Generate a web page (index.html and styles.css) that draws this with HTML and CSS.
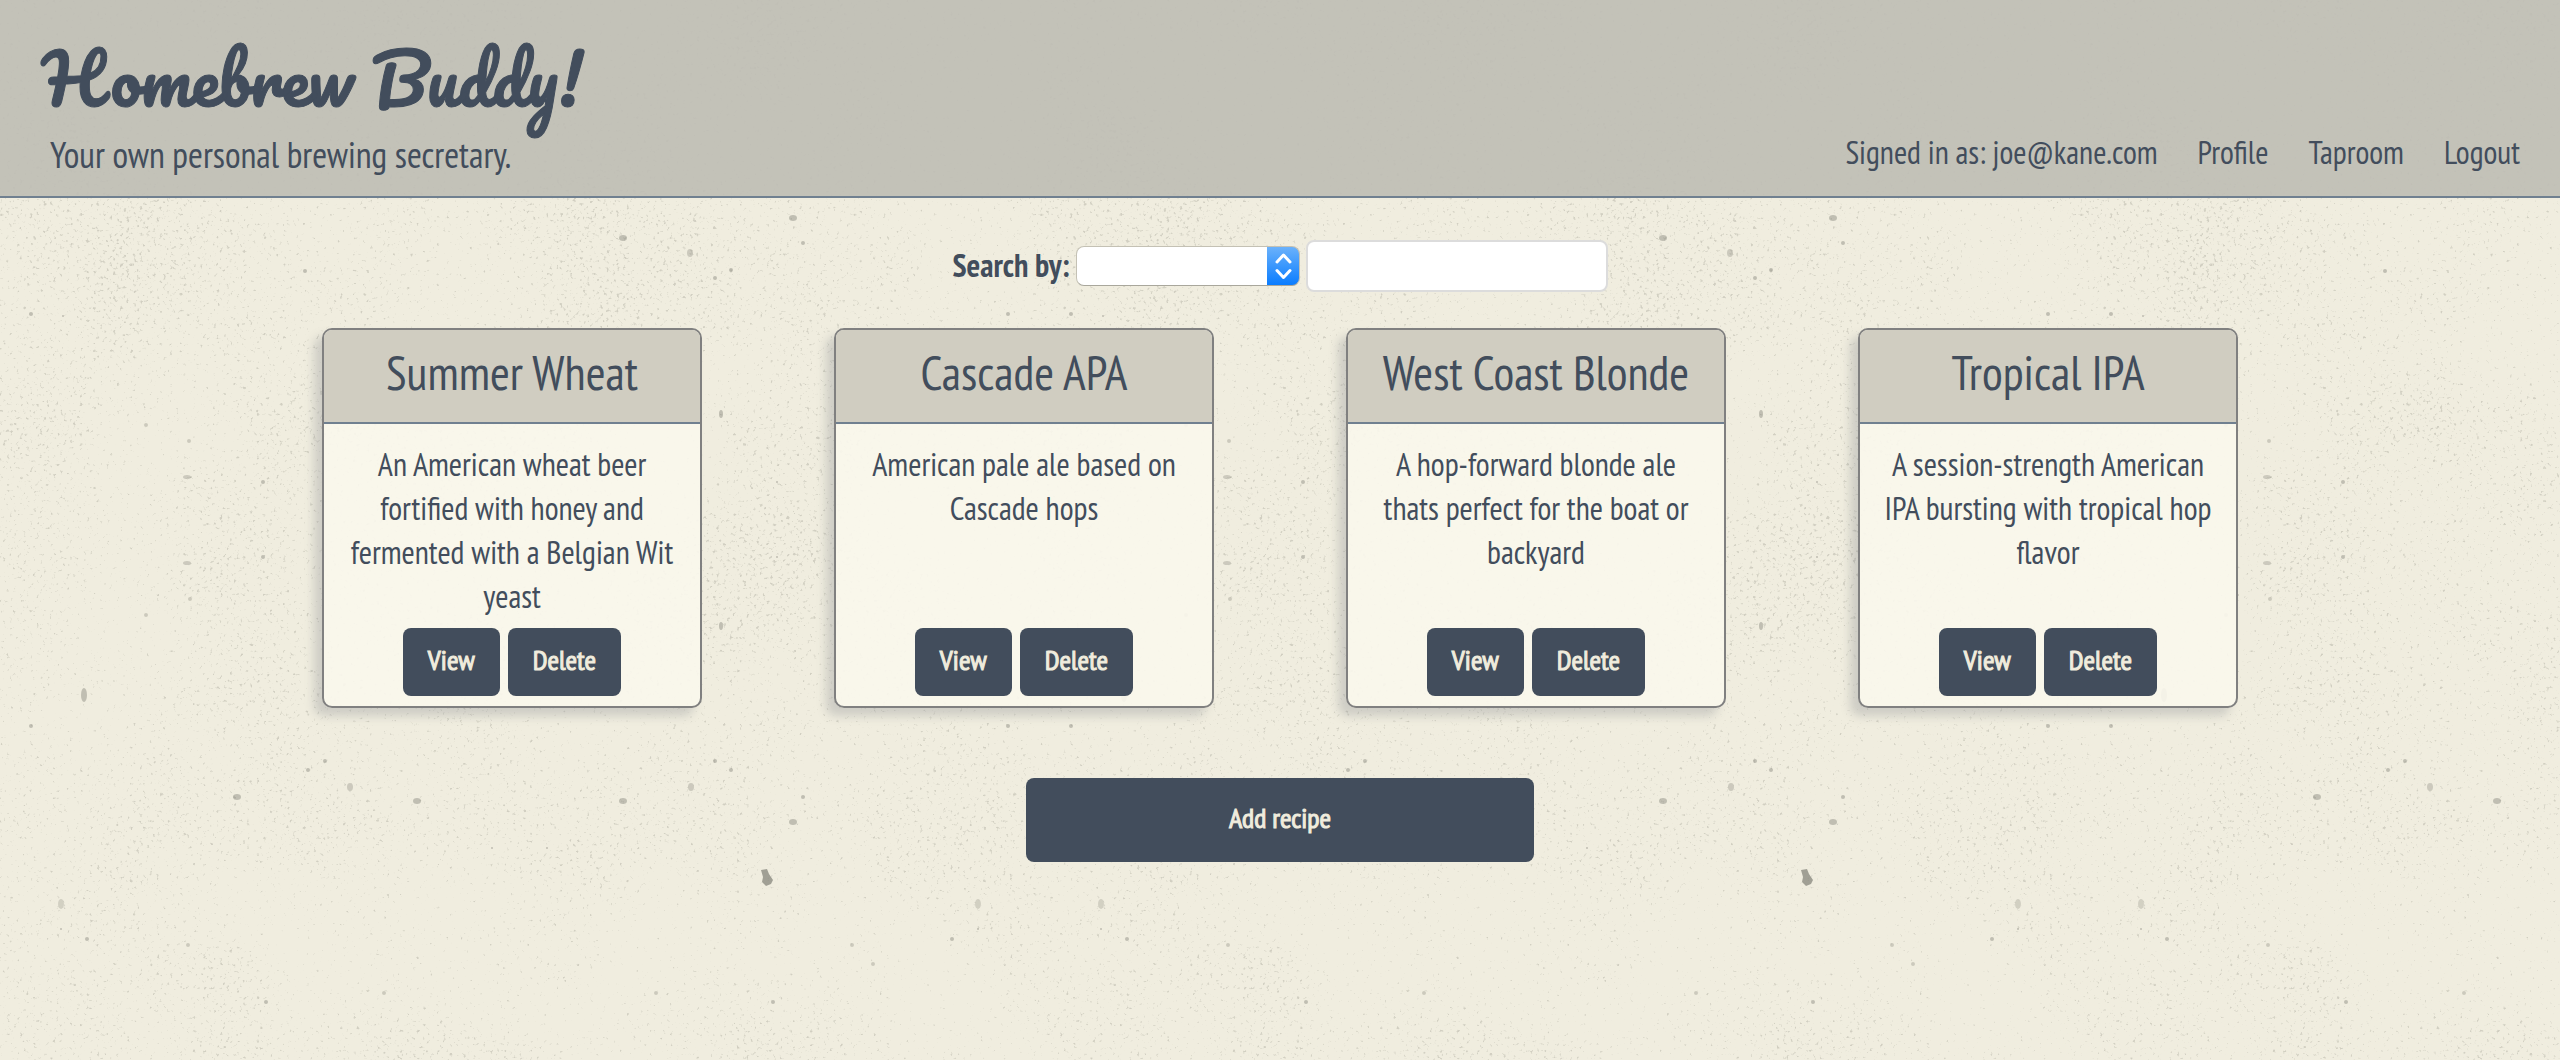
FILE: index.html
```html
<!DOCTYPE html>
<html lang="en">
<head>
  <meta charset="utf-8">
  <meta name="viewport" content="width=device-width, initial-scale=1">
  <title>Homebrew Buddy!</title>
  <link rel="stylesheet" href="styles.css">
</head>
<body>
  <header class="site-header">
    <div class="brand">
      <h1 class="logo">Homebrew Buddy!</h1>
      <p class="tagline">Your own personal brewing secretary.</p>
    </div>
    <nav class="site-nav">
      <span>Signed in as: joe@kane.com</span>
      <a href="#profile">Profile</a>
      <a href="#taproom">Taproom</a>
      <a href="#logout">Logout</a>
    </nav>
  </header>
  <main class="content">
    <form class="search">
      <label class="search-label" for="search-field">Search by:</label>
      <select class="search-select" id="search-field">
        <option></option>
      </select>
      <input class="search-input" type="text" aria-label="Search text">
    </form>
    <section class="recipes">
      <article class="card">
        <h2 class="card-title">Summer Wheat</h2>
        <p class="card-text">An American wheat beer fortified with honey and fermented with a Belgian Wit yeast</p>
        <div class="card-actions">
          <button class="btn" type="button">View</button>
          <button class="btn" type="button">Delete</button>
        </div>
      </article>
      <article class="card">
        <h2 class="card-title">Cascade APA</h2>
        <p class="card-text">American pale ale based on Cascade hops</p>
        <div class="card-actions">
          <button class="btn" type="button">View</button>
          <button class="btn" type="button">Delete</button>
        </div>
      </article>
      <article class="card">
        <h2 class="card-title">West Coast Blonde</h2>
        <p class="card-text">A hop-forward blonde ale thats perfect for the boat or backyard</p>
        <div class="card-actions">
          <button class="btn" type="button">View</button>
          <button class="btn" type="button">Delete</button>
        </div>
      </article>
      <article class="card">
        <h2 class="card-title">Tropical IPA</h2>
        <p class="card-text">A session-strength American IPA bursting with tropical hop flavor</p>
        <div class="card-actions">
          <button class="btn" type="button">View</button>
          <button class="btn" type="button">Delete</button>
        </div>
      </article>
    </section>
    <button class="btn btn-add" type="button">Add recipe</button>
  </main>
</body>
</html>
```
FILE: styles.css
```css
:root {
  --ink: #424d5c;
  --paper: #f0ecdd;
  --rule: #708090;
  --sans: "PT Sans Narrow", "Open Sans Condensed", "Roboto Condensed", "Liberation Sans", sans-serif;
}

* {
  box-sizing: border-box;
}

html {
  min-height: 100%;
}

/* Speckled paper: fine grain from a filter, larger flecks as ellipses. */
body {
  margin: 0;
  color: var(--ink);
  font-family: var(--sans);
  font-size: 32px;
  line-height: 44px;
  background-color: #f0eddf;
  background-image: url("data:image/svg+xml,%3Csvg xmlns='http://www.w3.org/2000/svg' width='1040' height='1040'%3E%3Cfilter id='g' x='0' y='0' width='100%25' height='100%25' color-interpolation-filters='sRGB'%3E%3CfeTurbulence type='fractalNoise' baseFrequency='.3' numOctaves='2' seed='7' stitchTiles='stitch'/%3E%3CfeColorMatrix values='0 0 0 0 0 0 0 0 0 0 0 0 0 0 0 1 0 0 0 0' result='a'/%3E%3CfeTurbulence type='fractalNoise' baseFrequency='.006' numOctaves='3' seed='3' stitchTiles='stitch'/%3E%3CfeColorMatrix values='0 0 0 0 0 0 0 0 0 0 0 0 0 0 0 1 0 0 0 0' result='b'/%3E%3CfeComposite in='a' in2='b' operator='arithmetic' k2='6' k3='1.400' k4='-4.650' result='c'/%3E%3CfeFlood flood-color='%238c8c80' flood-opacity='.3'/%3E%3CfeComposite in2='c' operator='in'/%3E%3C/filter%3E%3Crect width='1040' height='1040' filter='url(%23g)'/%3E%3Cg fill='%2377776d' fill-opacity='.4'%3E%3Cpath fill-opacity='.65' d='M761 870l6-1 2 5 4 6-2 4-5 2-4-4 1-5z'/%3E%3Cellipse cx='84' cy='695' rx='3' ry='7'/%3E%3Cellipse cx='237' cy='797' rx='4' ry='3'/%3E%3Cellipse cx='417' cy='801' rx='4' ry='3'/%3E%3Cellipse cx='623' cy='801' rx='4' ry='3'/%3E%3Cellipse cx='623' cy='238' rx='4' ry='3'/%3E%3Cellipse cx='721' cy='626' rx='2' ry='4'/%3E%3Cellipse cx='721' cy='414' rx='2' ry='4'/%3E%3Cellipse cx='793' cy='822' rx='4' ry='3'/%3E%3Cellipse cx='793' cy='218' rx='4' ry='3'/%3E%3Cellipse cx='61' cy='904' rx='3' ry='5' fill-opacity='.25'/%3E%3Cellipse cx='978' cy='904' rx='3' ry='5' fill-opacity='.25'/%3E%3Cellipse cx='350' cy='787' rx='3' ry='4' fill-opacity='.3'/%3E%3Cellipse cx='691' cy='787' rx='3' ry='4' fill-opacity='.3'/%3E%3Cellipse cx='690' cy='253' rx='3' ry='4' fill-opacity='.3'/%3E%3Cellipse cx='187' cy='563' rx='4' ry='2' fill-opacity='.3'/%3E%3Cellipse cx='187' cy='477' rx='4' ry='2' fill-opacity='.3'/%3E%3Ccircle cx='31' cy='726' r='2'/%3E%3Ccircle cx='31' cy='314' r='2'/%3E%3Ccircle cx='63' cy='316' r='1'/%3E%3Ccircle cx='263' cy='557' r='2'/%3E%3Ccircle cx='263' cy='482' r='2'/%3E%3Ccircle cx='777' cy='557' r='1'/%3E%3Ccircle cx='777' cy='482' r='1'/%3E%3Ccircle cx='308' cy='770' r='2'/%3E%3Ccircle cx='325' cy='761' r='2'/%3E%3Ccircle cx='305' cy='271' r='2'/%3E%3Ccircle cx='731' cy='770' r='2'/%3E%3Ccircle cx='715' cy='761' r='2'/%3E%3Ccircle cx='731' cy='270' r='2'/%3E%3Ccircle cx='715' cy='278' r='2'/%3E%3Ccircle cx='803' cy='797' r='2'/%3E%3Ccircle cx='803' cy='243' r='2'/%3E%3Ccircle cx='87' cy='939' r='2'/%3E%3Ccircle cx='952' cy='939' r='2'/%3E%3Ccircle cx='61' cy='929' r='1'/%3E%3Ccircle cx='978' cy='929' r='1'/%3E%3Ccircle cx='188' cy='945' r='2' fill-opacity='.3'/%3E%3Ccircle cx='852' cy='945' r='2' fill-opacity='.3'/%3E%3Ccircle cx='873' cy='964' r='2' fill-opacity='.3'/%3E%3Ccircle cx='266' cy='1002' r='2'/%3E%3Ccircle cx='773' cy='1002' r='2'/%3E%3Ccircle cx='384' cy='993' r='2' fill-opacity='.3'/%3E%3Ccircle cx='656' cy='993' r='2' fill-opacity='.3'/%3E%3Ccircle cx='492' cy='848' r='1'/%3E%3Ccircle cx='547' cy='848' r='1'/%3E%3Ccircle cx='1008' cy='726' r='2'/%3E%3Ccircle cx='1008' cy='314' r='2'/%3E%3Ccircle cx='190' cy='599' r='2' fill-opacity='.3'/%3E%3Ccircle cx='189' cy='441' r='2' fill-opacity='.3'/%3E%3Ccircle cx='146' cy='615' r='2' fill-opacity='.3'/%3E%3Ccircle cx='146' cy='425' r='2' fill-opacity='.3'/%3E%3C/g%3E%3C/svg%3E");
}

.site-header {
  display: flex;
  justify-content: space-between;
  align-items: flex-end;
  padding: 23px 40px 19px;
  border-bottom: 2px solid var(--rule);
  background: rgba(190, 189, 180, 0.9);
}

.logo {
  margin: 0;
  padding-left: 2px;
  font-family: Pacifico, cursive;
  font-size: 68px;
  font-weight: 400;
  line-height: 110px;
  -webkit-text-stroke: 1px currentColor;
}

.tagline {
  margin: 0;
  padding-left: 10px;
  font-size: 36px;
  line-height: 44px;
}

.site-nav {
  display: flex;
  gap: 40px;
  padding-bottom: 3px;
}

.site-nav a {
  color: inherit;
  text-decoration: none;
}

.content {
  display: flex;
  flex-direction: column;
  align-items: center;
  padding: 42px 0 80px;
}

.search {
  display: flex;
  align-items: center;
  gap: 6px;
  margin-bottom: 36px;
}

.search-label {
  padding-bottom: 2px;
  font-weight: 700;
}

.search-select {
  appearance: none;
  width: 224px;
  height: 40px;
  border: 1px solid #c4c1b4;
  border-bottom-color: #a9a79c;
  border-radius: 8px;
  font: inherit;
  background:
    url("data:image/svg+xml,%3Csvg xmlns='http://www.w3.org/2000/svg' width='33' height='40'%3E%3Cdefs%3E%3ClinearGradient id='b' x2='0' y2='1'%3E%3Cstop stop-color='%236db3fb'/%3E%3Cstop offset='1' stop-color='%23077bff'/%3E%3C/linearGradient%3E%3C/defs%3E%3Cpath fill='url(%23b)' d='M0 0h25a8 8 0 0 1 8 8v24a8 8 0 0 1-8 8H0z'/%3E%3Cpath fill='none' stroke='%23fff' stroke-width='3' stroke-linecap='round' stroke-linejoin='round' d='M10 16l6.500-7 6.500 7M10 24.500l6.500 7 6.500-7'/%3E%3C/svg%3E") right center / 33px 40px no-repeat border-box,
    #fff;
}

.search-input {
  width: 302px;
  height: 52px;
  padding: 0 12px;
  border: 2px solid #dcdcdc;
  border-radius: 8px;
  color: inherit;
  font: inherit;
  background: #fff;
}

.recipes {
  display: grid;
  grid-template-columns: repeat(4, 1fr);
  justify-items: center;
  width: 80%;
}

.card {
  display: flex;
  flex-direction: column;
  width: 380px;
  min-height: 380px;
  border: 2px solid #808080;
  border-radius: 10px;
  text-align: center;
  background: rgba(249, 247, 236, 0.9);
  box-shadow: -8px 8px 10px rgba(128, 132, 140, 0.3);
}

.card-title {
  margin: 0;
  padding: 10px 0 18px;
  border-bottom: 2px solid var(--rule);
  border-radius: 8px 8px 0 0;
  font-size: 48px;
  font-weight: 400;
  line-height: 64px;
  background: rgba(205, 202, 191, 0.95);
}

.card-text {
  margin: 0;
  padding: 18px 20px 0;
}

.card-actions {
  display: flex;
  justify-content: center;
  gap: 8px;
  margin-top: auto;
  padding-bottom: 10px;
}

.btn {
  padding: 14px 25px 18px;
  border: 0;
  border-radius: 8px;
  color: var(--paper);
  font-family: var(--sans);
  font-size: 28px;
  line-height: 36px;
  background: var(--ink);
  -webkit-text-stroke: 1px currentColor;
}

.btn-add {
  width: 508px;
  margin-top: 70px;
  padding: 22px 24px 26px;
}
```
